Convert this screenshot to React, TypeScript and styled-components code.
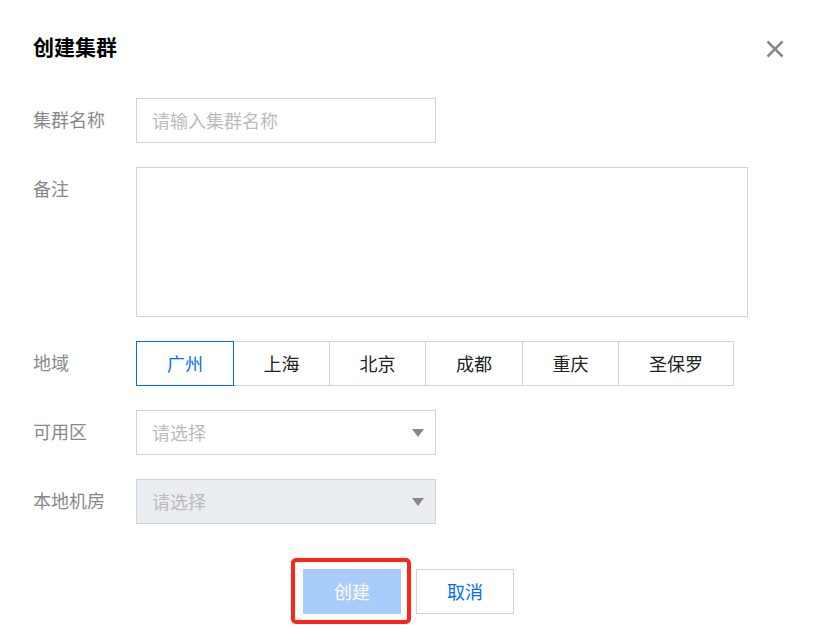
import React, { useState } from "react";
import styled, { createGlobalStyle } from "styled-components";

const Global = createGlobalStyle`
  html, body { margin: 0; padding: 0; background: #fff; }
  body { font-family: "Noto Sans CJK SC", "Noto Sans", sans-serif; }
  * { box-sizing: border-box; }
`;

const Page = styled.div`
  width: 817px;
  height: 643px;
  padding: 31px 33px 0 33px;
  background: #fff;
  overflow: hidden;
`;

const Header = styled.div`
  display: flex;
  align-items: center;
  justify-content: space-between;
  height: 30px;
  margin-bottom: 37px;
`;

const Title = styled.h2`
  margin: 0;
  font-size: 21px;
  line-height: 30px;
  font-weight: 700;
  color: #000;
`;

const CloseButton = styled.button`
  width: 20px;
  height: 20px;
  padding: 0;
  margin: 5px -1px 0 0;
  border: none;
  background: transparent;
  display: flex;
  align-items: center;
  justify-content: center;
  cursor: pointer;
`;

const Form = styled.div`
  display: grid;
  grid-template-columns: 103px 1fr;
  row-gap: 24px;
  align-items: start;
`;

const Label = styled.div`
  font-size: 18px;
  line-height: 43px;
  color: #888;
`;

const TextInput = styled.input`
  width: 300px;
  height: 45px;
  border: 1px solid #cfd4dc;
  padding: 0 15px 2px;
  font-size: 18px;
  font-family: inherit;
  color: #222;
  outline: none;
  &::placeholder { color: #bbb; }
`;

const TextArea = styled.textarea`
  display: block;
  width: 612px;
  height: 150px;
  border: 1px solid #cfd4dc;
  padding: 10px 15px;
  font-size: 18px;
  font-family: inherit;
  resize: none;
  outline: none;
`;

const Segments = styled.div`
  display: flex;
  height: 45px;
`;

const Segment = styled.button<{ $active?: boolean; $w: number }>`
  position: relative;
  width: ${(p) => p.$w}px;
  height: 45px;
  margin-left: -1px;
  &:first-child { margin-left: 0; }
  border: 1px solid ${(p) => (p.$active ? "#006eff" : "#cfd4dc")};
  z-index: ${(p) => (p.$active ? 1 : 0)};
  background: #fff;
  color: ${(p) => (p.$active ? "#006eff" : "#222")};
  font-size: 18px;
  font-family: inherit;
  padding: 0 0 2px;
  cursor: pointer;
`;

const Select = styled.div<{ $disabled?: boolean }>`
  width: 300px;
  height: 45px;
  border: 1px solid #cfd4dc;
  background: ${(p) => (p.$disabled ? "#eaedf1" : "#fff")};
  display: flex;
  align-items: center;
  justify-content: space-between;
  padding: 0 11px 2px 15px;
  font-size: 18px;
  color: #bbb;
`;

const Arrow = styled.span`
  width: 0;
  height: 0;
  margin-top: 2px;
  border-left: 6px solid transparent;
  border-right: 6px solid transparent;
  border-top: 8px solid #888;
`;

const Footer = styled.div`
  display: flex;
  justify-content: center;
  gap: 15px;
  margin-top: 45px;
`;

const Highlight = styled.div`
  position: relative;
  &::after {
    content: "";
    position: absolute;
    top: -11px;
    left: -12px;
    right: -10px;
    bottom: -10px;
    border: 4px solid #ff2318;
    border-radius: 5px;
    pointer-events: none;
  }
`;

const Button = styled.button<{ $primary?: boolean }>`
  width: 98px;
  height: 45px;
  font-size: 18px;
  font-family: inherit;
  border: 1px solid ${(p) => (p.$primary ? "#a8cdfd" : "#cfd4dc")};
  background: ${(p) => (p.$primary ? "#a8cdfd" : "#fff")};
  color: ${(p) => (p.$primary ? "#fff" : "#006eff")};
  padding: 0 0 2px;
  cursor: pointer;
`;

const regions: { name: string; w: number }[] = [
  { name: "广州", w: 98 },
  { name: "上海", w: 97 },
  { name: "北京", w: 97 },
  { name: "成都", w: 98 },
  { name: "重庆", w: 97 },
  { name: "圣保罗", w: 116 },
];

export default function App() {
  const [region, setRegion] = useState("广州");
  return (
    <>
      <Global />
      <Page>
        <Header>
          <Title>创建集群</Title>
          <CloseButton aria-label="关闭">
            <svg width="18" height="18" viewBox="0 0 18 18">
              <path d="M1.5 1.5 L16.5 16.5 M16.5 1.5 L1.5 16.5" stroke="#888" strokeWidth="2.5" fill="none" />
            </svg>
          </CloseButton>
        </Header>
        <Form>
          <Label>集群名称</Label>
          <div>
            <TextInput placeholder="请输入集群名称" />
          </div>
          <Label>备注</Label>
          <div>
            <TextArea />
          </div>
          <Label>地域</Label>
          <Segments>
            {regions.map((r) => (
              <Segment key={r.name} $w={r.w} $active={region === r.name} onClick={() => setRegion(r.name)}>
                {r.name}
              </Segment>
            ))}
          </Segments>
          <Label>可用区</Label>
          <Select>
            <span>请选择</span>
            <Arrow />
          </Select>
          <Label>本地机房</Label>
          <Select $disabled>
            <span>请选择</span>
            <Arrow />
          </Select>
        </Form>
        <Footer>
          <Highlight>
            <Button $primary>创建</Button>
          </Highlight>
          <Button>取消</Button>
        </Footer>
      </Page>
    </>
  );
}
